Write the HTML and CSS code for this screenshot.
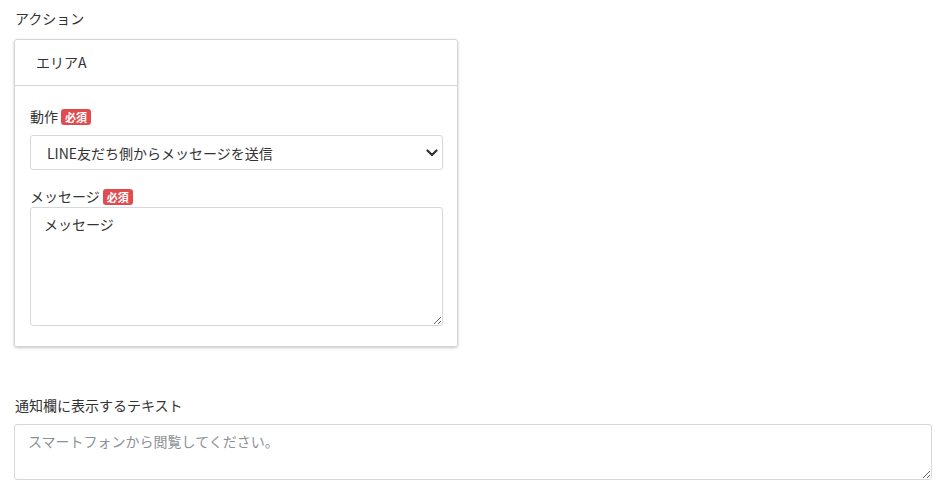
FILE: index.html
```html
<!DOCTYPE html>
<html lang="ja">
    <head>
        <meta charset="utf-8">
        <title>アクション</title>
        <link rel="stylesheet" href="styles.css">
    </head>
    <body>
        <form class="page" action="#" method="post">
            <div class="section-label">アクション</div>

            <div class="card">
                <div class="card-header">エリアA</div>
                <div class="card-body">
                    <label class="field-label" for="action">動作 <span class="badge">必須</span></label>
                    <div class="select-wrap">
                        <select id="action" class="select">
                            <option>LINE友だち側からメッセージを送信</option>
                        </select>
                        <svg class="select-arrow" width="12" height="8" viewBox="0 0 12 8">
                            <path d="M1.5 1.5 L6 6 L10.5 1.5" fill="none" stroke="#333" stroke-width="2.2" stroke-linecap="round" stroke-linejoin="round"/>
                        </svg>
                    </div>

                    <label class="field-label field-label-tight" for="message">メッセージ <span class="badge">必須</span></label>
                    <textarea id="message" class="textarea textarea-message">メッセージ</textarea>
                </div>
            </div>

            <label class="field-label notice-label" for="notice">通知欄に表示するテキスト</label>
            <textarea id="notice" class="textarea textarea-notice" placeholder="スマートフォンから閲覧してください。"></textarea>
        </form>
    </body>
</html>
```

FILE: styles.css
```css
body {
    margin: 0;
    background: #fff;
    color: #333;
    font-family: "Noto Sans CJK JP", "Noto Sans", sans-serif;
    font-size: 14px;
    line-height: 21px;
}

.page {
    padding: 8px 15px 0 14px;
}

.section-label {
    padding-left: 1px;
    margin-bottom: 10px;
}

.card {
    width: 444px;
    box-sizing: border-box;
    border: 1px solid #d3d5d9;
    border-radius: 3px;
    box-shadow: 0 1px 3px rgba(0, 0, 0, 0.22);
}

.card-header {
    padding: 12px 21px;
    border-bottom: 1px solid #d3d5d9;
}

.card-body {
    padding: 20px 14px 20px 15px;
}

.field-label {
    display: flex;
    align-items: center;
    gap: 3px;
    margin-bottom: 8px;
}

.field-label-tight {
    margin-top: 16px;
    margin-bottom: 0;
}

.badge {
    display: inline-block;
    background: #e14b4f;
    color: #fff;
    font-size: 11px;
    font-weight: bold;
    line-height: 16px;
    padding: 0 4px;
    border-radius: 3px;
}

.select-wrap {
    position: relative;
}

.select {
    display: block;
    width: 100%;
    height: 35px;
    box-sizing: border-box;
    appearance: none;
    -webkit-appearance: none;
    background: #fff;
    border: 1px solid #d6d8dc;
    border-radius: 3px;
    padding: 0 30px 0 16px;
    color: #333;
    font-family: inherit;
    font-size: 14px;
}

.select-arrow {
    position: absolute;
    right: 5px;
    top: 14px;
    pointer-events: none;
}

.textarea {
    display: block;
    width: 100%;
    box-sizing: border-box;
    border: 1px solid #d6d8dc;
    border-radius: 3px;
    padding: 6px 13px;
    color: #333;
    font-family: inherit;
    font-size: 14px;
    line-height: 21px;
    resize: both;
}

.textarea::placeholder {
    color: #8e9297;
}

.textarea-message {
    height: 119px;
}

.notice-label {
    padding-left: 1px;
    margin-top: 48px;
    margin-bottom: 8px;
}

.textarea-notice {
    height: 56px;
}
```
